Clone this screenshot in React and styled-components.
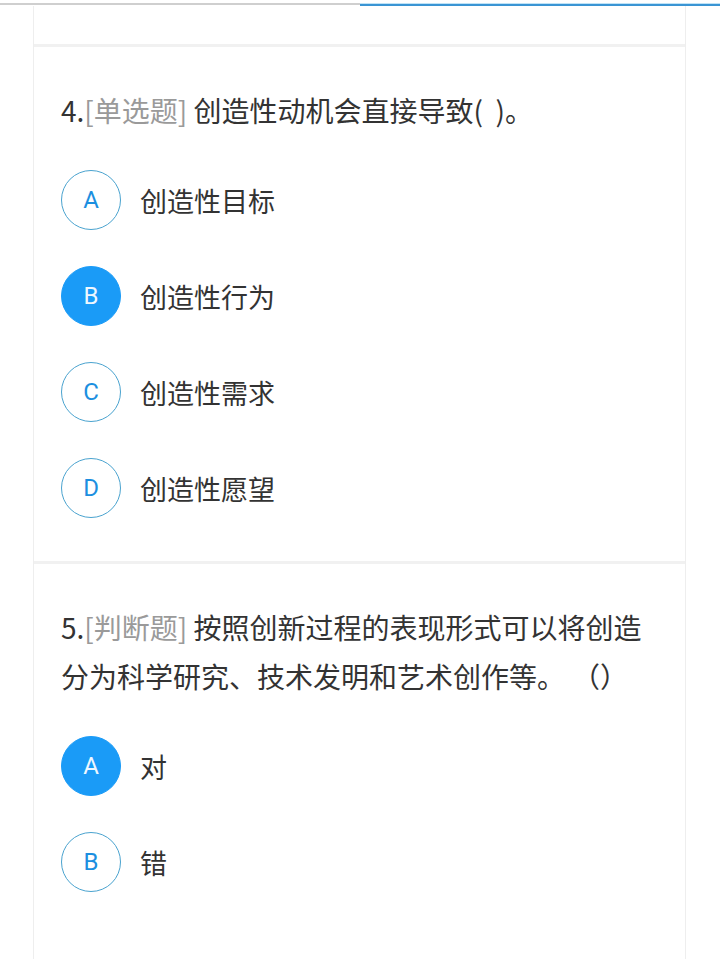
import React from "react";
import styled, { createGlobalStyle } from "styled-components";

const GlobalStyle = createGlobalStyle`
  html, body {
    margin: 0;
    padding: 0;
    background: #ffffff;
  }
  body {
    font-family: "Noto Sans CJK SC", "Noto Sans", Roboto, sans-serif;
    color: #333333;
  }
`;

const questions = [
  {
    id: 4,
    type: "单选题",
    text: "创造性动机会直接导致(  )。",
    options: [
      { key: "A", text: "创造性目标" },
      { key: "B", text: "创造性行为", picked: true },
      { key: "C", text: "创造性需求" },
      { key: "D", text: "创造性愿望" },
    ],
  },
  {
    id: 5,
    type: "判断题",
    text: "按照创新过程的表现形式可以将创造分为科学研究、技术发明和艺术创作等。\u2005（）",
    options: [
      { key: "A", text: "对", picked: true },
      { key: "B", text: "错" },
    ],
  },
];

const App = () => {
  return (
    <Page>
      <GlobalStyle />
      <Progress>
        <Track />
        <Done />
      </Progress>
      <Sheet>
        <PrevTail />
        {questions.map((q) => (
          <Question key={q.id}>
            <Title>
              {q.id}.<Tag>[{q.type}]</Tag> {q.text}
            </Title>
            <Options>
              {q.options.map((o) => (
                <Option key={o.key}>
                  <Letter picked={o.picked}>{o.key}</Letter>
                  <OptionText>{o.text}</OptionText>
                </Option>
              ))}
            </Options>
          </Question>
        ))}
      </Sheet>
    </Page>
  );
};

const Page = styled.div`
  width: 720px;
  min-height: 959px;
  overflow: hidden;
`;

const Progress = styled.div`
  display: flex;
  height: 3px;
  margin-top: 3px;
`;

const Track = styled.div`
  flex: 1;
  height: 2px;
  background: #cfcfcf;
`;

const Done = styled.div`
  flex: 1;
  height: 3px;
  background: #3a95d4;
  border-top: 1px solid #bfe3f7;
  box-sizing: border-box;
`;

const Sheet = styled.div`
  margin: 0 34px 0 33px;
  border-left: 1px solid #eeeeee;
  border-right: 1px solid #eeeeee;
  min-height: 960px;
`;

const PrevTail = styled.div`
  height: 38px;
`;

const Question = styled.section`
  border-top: 3px solid #f1f1f1;
  padding: 39px 40px 43px 27px;
`;

const Title = styled.div`
  font-size: 28px;
  line-height: 49px;
  color: #333333;
  white-space: pre-wrap;
`;

const Tag = styled.span`
  color: #9a9a9a;
`;

const Options = styled.div`
  display: flex;
  flex-direction: column;
  gap: 36px;
  margin-top: 35px;
`;

const Option = styled.div`
  display: flex;
  align-items: center;
  gap: 19px;
  height: 60px;
`;

const Letter = styled.div`
  width: 60px;
  height: 60px;
  box-sizing: border-box;
  border-radius: 50%;
  display: flex;
  align-items: center;
  justify-content: center;
  font-family: Roboto, "Noto Sans", sans-serif;
  font-size: 24px;
  border: 1px solid ${(p) => (p.picked ? "#1a9bf7" : "#4aa3cf")};
  background: ${(p) => (p.picked ? "#1a9bf7" : "#ffffff")};
  color: ${(p) => (p.picked ? "#eef7ff" : "#1c8fe0")};
`;

const OptionText = styled.span`
  font-size: 27px;
  color: #333333;
`;

export default App;
